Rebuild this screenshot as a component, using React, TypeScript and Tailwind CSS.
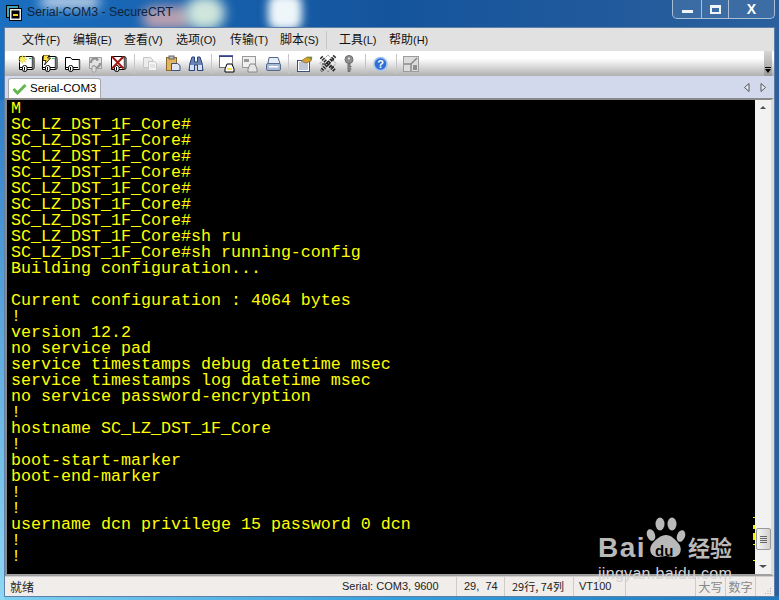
import React from 'react';

const lines = [
  'M',
  'SC_LZ_DST_1F_Core#',
  'SC_LZ_DST_1F_Core#',
  'SC_LZ_DST_1F_Core#',
  'SC_LZ_DST_1F_Core#',
  'SC_LZ_DST_1F_Core#',
  'SC_LZ_DST_1F_Core#',
  'SC_LZ_DST_1F_Core#',
  'SC_LZ_DST_1F_Core#sh ru',
  'SC_LZ_DST_1F_Core#sh running-config',
  'Building configuration...',
  '',
  'Current configuration : 4064 bytes',
  '!',
  'version 12.2',
  'no service pad',
  'service timestamps debug datetime msec',
  'service timestamps log datetime msec',
  'no service password-encryption',
  '!',
  'hostname SC_LZ_DST_1F_Core',
  '!',
  'boot-start-marker',
  'boot-end-marker',
  '!',
  '!',
  'username dcn privilege 15 password 0 dcn',
  '!',
  '!',
];

const menus = [
  ['文件', '(F)', 'w-[51px]'],
  ['编辑', '(E)', 'w-[51px]'],
  ['查看', '(V)', 'w-[52px]'],
  ['选项', '(O)', 'w-[54px]'],
  ['传输', '(T)', 'w-[50px]'],
  ['脚本', '(S)', 'w-[48px]'],
];

function Plug() {
  return (
    <>
      <path d="M1.500 12.500h3M9 12.500h5" fill="none" stroke="#000" />
      <rect x="4.500" y="10.500" width="4.500" height="6" rx="2" fill="#fff" stroke="#000" />
      <path d="M6.500 12v3.500" stroke="#000" />
    </>
  );
}

function Screen() {
  return (
    <>
      <path d="M1.500 1.500h13l1.500 1v11l-1.500 1h-13z" fill="#fff" stroke="#000" />
      <path d="M14.500 2v12" stroke="#555" strokeWidth="1.500" />
      <rect x="11" y="3" width="2.500" height="1" fill="#22c55e" />
    </>
  );
}

function Icon({ children, w = 17 }: { children: React.ReactNode; w?: number }) {
  return (
    <svg width={w} height="18" viewBox={`0 0 ${w} 18`} className="shrink-0">
      {children}
    </svg>
  );
}

function Sep({ className = 'mx-[7px]' }: { className?: string }) {
  return <div className={`h-[20px] w-px shrink-0 bg-[#c6c6c6] ${className}`} />;
}

function Toolbar() {
  return (
    <div className="flex h-[25px] items-center bg-gradient-to-b from-white from-30% to-[#b0b0b0] pl-[13px]">
      <div className="flex items-center gap-[6px]">
        <Icon>
          <Screen />
          <Plug />
          <path d="M4.500 0l1 2.500L8 1 6.500 3.500 9.500 4 6.500 5 8 7.500 5.500 6l-1 2.500L3.500 6 1 7.500 2.500 5 0 4l2.500-.5L1 1l2.500 1.500z" fill="#f6ef60" stroke="#c9b84a" strokeWidth="0.400" />
        </Icon>
        <Icon>
          <Screen />
          <Plug />
          <path d="M2.500 0h6L6.500 3h3L3.500 10 5 5.500H2z" fill="#fde047" stroke="#000" strokeWidth="0.800" />
        </Icon>
        <Icon>
          <path d="M1.500 14.500v-12h5l1.500 2h7.500v10z" fill="#fff" stroke="#000" />
          <path d="M15.500 5v9.500" stroke="#555" strokeWidth="1.500" />
          <Plug />
        </Icon>
        <Icon>
          <path d="M2.500 2.500h12v11h-12z" fill="#e2e2e2" stroke="#9a9a9a" />
          <path d="M4 8a4 4 0 017-3M13 8a4 4 0 01-7 3" fill="none" stroke="#8f8f8f" strokeWidth="2" />
          <path d="M10 3l2 2-3 1zM7 13l-2-2 3-1z" fill="#8f8f8f" />
          <rect x="5" y="11" width="4" height="6" rx="1.500" fill="#ddd" stroke="#999" />
        </Icon>
        <Icon>
          <Screen />
          <Plug />
          <path d="M2 1.500l11.500 12M13.500 1.500L2 13.500" stroke="#a11a12" strokeWidth="2" />
        </Icon>
      </div>
      <Sep />
      <div className="flex items-center gap-[7px]">
        <Icon w={16}>
          <path d="M1.500 2.500h7l2 2v8h-9z" fill="#ececec" stroke="#c6c6c6" />
          <path d="M6.500 6.500h6l2 2v7h-8z" fill="#f4f4f4" stroke="#c6c6c6" />
          <path d="M8 10h5M8 12h5" stroke="#d4d4d4" />
        </Icon>
        <Icon w={16}>
          <rect x="1.500" y="2.500" width="10" height="13" fill="#e3b45d" stroke="#8a6a2a" />
          <rect x="4" y="1" width="5" height="3" fill="#b9b9b9" stroke="#666" />
          <path d="M6.500 8.500h6l2.500 2v5h-8.500z" fill="#dfe6f2" stroke="#39527c" />
        </Icon>
        <Icon w={16}>
          <path d="M2 8l2-6h2.500v5h3V2H12l2 6 1 7.500H9.500V10h-3v5.500H1z" fill="#6d86b6" stroke="#26447c" />
          <rect x="2" y="10" width="4" height="5" fill="#d5e0f2" />
          <rect x="10" y="10" width="4" height="5" fill="#d5e0f2" />
        </Icon>
      </div>
      <Sep />
      <div className="flex items-center gap-[7px]">
        <Icon w={16}>
          <rect x="0.500" y="1.500" width="13" height="11" fill="#fff" stroke="#777" />
          <path d="M0 1h14" stroke="#1e2f8c" strokeWidth="1.500" />
          <path d="M6 14l2-5h5l2 5v3H6z" fill="#fff" stroke="#000" />
          <rect x="8" y="13" width="5" height="2" fill="#fde047" />
        </Icon>
        <Icon w={16}>
          <rect x="0.500" y="1.500" width="13" height="11" fill="#f0f0f0" stroke="#999" />
          <rect x="2" y="4" width="5" height="3" fill="#9a9a9a" />
          <path d="M6 14l2-5h5l2 5v3H6z" fill="#e5e5e5" stroke="#888" />
        </Icon>
        <Icon w={16}>
          <path d="M4 2.500h9l2 6H3z" fill="#e7edf6" stroke="#55698c" />
          <rect x="1.500" y="8.500" width="14" height="7" rx="1.500" fill="#a9bad3" stroke="#55698c" />
          <rect x="4" y="11" width="9" height="1.500" fill="#fff" />
        </Icon>
      </div>
      <Sep />
      <div className="flex items-center gap-[6px]">
        <Icon>
          <rect x="1.500" y="5.500" width="12" height="11" fill="#fff" stroke="#39527c" />
          <path d="M3 8h9M3 10h9M3 12h9M3 14h9" stroke="#7d90b4" />
          <path d="M5 6l6-4 5 0-1 4-5 2z" fill="#d9a036" stroke="#6e5a1a" strokeWidth="0.600" />
          <path d="M11 2h5v3z" fill="#5f9b35" />
        </Icon>
        <Icon w={18}>
          <path d="M2 2l14 14M16 1L2 16" stroke="#222" strokeWidth="3.500" strokeDasharray="1.500 1" />
          <path d="M9 0l8 8.500-8 8.500-8-8.500z" fill="none" stroke="#777" strokeDasharray="1 1" />
          <path d="M3 9h3M12 12h3M12 5h3" stroke="#000" />
        </Icon>
        <div className="ml-px">
          <Icon w={10}>
            <circle cx="5" cy="4.500" r="4" fill="#8f8f8f" stroke="#6e6e6e" />
            <circle cx="5" cy="3.500" r="1" fill="#eee" />
            <path d="M4 8.500h2v8H4zM6 11.500h1.500M6 14h1.500" fill="#8f8f8f" stroke="#6e6e6e" />
          </Icon>
        </div>
      </div>
      <Sep className="ml-[11px] mr-[7px]" />
      <Icon w={15}>
        <circle cx="7.500" cy="9" r="6.500" fill="#2f6fd6" stroke="#a5c4ee" strokeWidth="1.500" />
        <text x="7.500" y="13" textAnchor="middle" fill="#fff" fontSize="11" fontWeight="700" fontFamily="Liberation Sans, sans-serif">?</text>
      </Icon>
      <Sep className="ml-[8px] mr-[6px]" />
      <Icon w={16}>
        <rect x="0.500" y="1.500" width="15" height="15" fill="#dcdcdc" stroke="#9c9c9c" />
        <path d="M1 9h7v7M8 9l6-6" fill="none" stroke="#8a8a8a" strokeWidth="1.500" />
        <rect x="10" y="10" width="4" height="5" fill="#8f8f8f" />
      </Icon>
      <div className="ml-auto mr-[2px] flex h-full w-[8px] flex-col items-center justify-end bg-gradient-to-b from-[#d6d6d6] to-[#9a9a9a] pb-[3px]">
        <div className="mb-px h-px w-[6px] bg-black" />
        <div className="h-0 w-0 border-x-[3px] border-t-[4px] border-x-transparent border-t-black" />
      </div>
    </div>
  );
}

function Scrollbar() {
  return (
    <div className="flex w-[16px] shrink-0 flex-col items-center justify-between bg-[#f2f2f2]">
      <div className="mt-[6px] h-0 w-0 border-x-[3px] border-b-[3px] border-x-transparent border-b-[#505050]" />
      <div className="mt-auto mb-[15px] flex h-[22px] w-[15px] flex-col items-center justify-center gap-px rounded-[2px] border border-[#9a9a9a] bg-gradient-to-r from-[#f6f6f6] to-[#d0d0d0]">
        <div className="h-px w-[7px] bg-[#666]" />
        <div className="h-px w-[7px] bg-[#666]" />
        <div className="h-px w-[7px] bg-[#666]" />
        <div className="h-px w-[7px] bg-[#666]" />
      </div>
      <div className="mb-[6px] h-0 w-0 border-x-[4px] border-t-[3px] border-x-transparent border-t-[#505050]" />
    </div>
  );
}

function StatusCell({ className, children }: { className: string; children?: React.ReactNode }) {
  return (
    <div className={`flex h-full shrink-0 items-center whitespace-nowrap border-r border-[#cfcbc6] ${className}`}>{children}</div>
  );
}

function Watermark() {
  return (
    <div className="absolute left-[598px] top-[516px] w-[140px] text-[#b9b9b9] [font-family:'Liberation_Sans',sans-serif]">
      <svg width="40" height="43" viewBox="0 0 40 43" className="absolute left-[48px] top-0">
        <ellipse cx="5" cy="19" rx="4" ry="6" fill="#b9b9b9" transform="rotate(-20 5 19)" />
        <ellipse cx="14" cy="8" rx="4.500" ry="6.500" fill="#b9b9b9" />
        <ellipse cx="26" cy="8" rx="4.500" ry="6.500" fill="#b9b9b9" />
        <ellipse cx="35" cy="20" rx="4" ry="6" fill="#b9b9b9" transform="rotate(20 35 20)" />
        <path d="M20 19c5 0 9 4 13 9 4 6 1 13-6 13-3 0-4-1-7-1s-5 1-8 1c-7 0-10-7-6-13 4-5 9-9 14-9z" fill="#b9b9b9" />
      </svg>
      <div className="absolute left-0 top-[17px] text-[28px] font-bold leading-[30px] tracking-[1.500px]">Bai</div>
      <div className="absolute left-[57px] top-[27px] rounded-full text-[15px] font-bold leading-[16px] text-black">du</div>
      <div className="absolute left-[90px] top-[17px] whitespace-nowrap text-[22px] font-bold leading-[26px] [font-family:'Noto_Sans_CJK_SC',sans-serif]">经验</div>
      <div className="absolute left-0 top-[49px] whitespace-nowrap text-[16px] leading-[18px] tracking-[0.300px] text-[#d4d4d4]">jingyan.baidu.com</div>
    </div>
  );
}

export default function App() {
  return (
    <div className="relative h-[600px] w-[779px] overflow-hidden bg-gradient-to-r from-[#1a6fc0] via-[#14549c] to-[#2a5f9c] [font-family:'Liberation_Sans',sans-serif]">
      <div className="absolute bottom-0 left-0 h-[4px] w-[779px] bg-gradient-to-r from-[#7fd0f0] via-[#35a0dc] to-[#1f78bc]" />
      <div className="absolute left-0 top-[100px] h-[500px] w-[5px] bg-gradient-to-b from-[#2f7fc8] to-[#8fd8f4]" />
      <div className="absolute left-[142px] top-[6px] h-[24px] w-[50px] rounded-full bg-[#b89fb0] blur-[6px]" />
      <div className="absolute left-[185px] top-[-4px] h-[34px] w-[40px] rounded-full bg-[#cfe6dc] blur-[6px]" />
      <div className="absolute left-[268px] top-[-6px] h-[36px] w-[34px] rounded-[10px] bg-[#eef6fa] blur-[4px]" />
      <div className="absolute left-[40px] top-[-4px] h-[12px] w-[60px] rounded-full bg-[#cfdcec] blur-[6px]" />

      <div className="relative flex h-[27px] items-start">
        <svg width="16" height="16" viewBox="0 0 16 16" className="ml-[6px] mt-[5px]">
          <rect x="0.500" y="0.500" width="12" height="12" fill="#3fa7b8" stroke="#000" />
          <rect x="3.500" y="3.500" width="12" height="12" fill="#e9e9e9" stroke="#000" />
          <rect x="5.500" y="5.500" width="8" height="8" fill="#000" />
          <rect x="7" y="9" width="5" height="2" fill="#f5d90a" />
        </svg>
        <div className="ml-[5px] mt-[4px] text-[12.300px] leading-[17px] text-[#10233a]">
          Serial-COM3 - SecureCRT
        </div>
        <div className="ml-auto mr-[4px] flex h-[19px] w-[103px] rounded-b-[5px] border border-t-0 border-[#a9bdd4] bg-[#4a76a8]/60 text-white">
          <div className="flex w-[29px] items-center justify-center border-r border-[#a9bdd4]">
            <div className="mt-[5px] h-[3px] w-[11px] bg-[#f2f5f8]" />
          </div>
          <div className="flex w-[27px] items-center justify-center border-r border-[#a9bdd4]">
            <div className="h-[9px] w-[11px] border-2 border-t-[3px] border-[#f2f5f8]" />
          </div>
          <div className="flex flex-1 items-center justify-center text-[14px] font-bold leading-none">X</div>
        </div>
      </div>

      <div className="relative mx-[4px] flex h-[570px] flex-col border border-[#5d7fa8] bg-[#ececec]">
        <div className="flex h-[23px] items-center bg-[#e1e1e1] pl-[17px] text-[12px] text-[#111] [font-family:'Noto_Sans_CJK_SC',sans-serif]">
          {menus.map(([zh, key, width]) => (
            <div key={zh} className={`${width} whitespace-nowrap`}>
              {zh}
              <span className="text-[11px] [font-family:'Liberation_Sans',sans-serif]">{key}</span>
            </div>
          ))}
          <div className="mr-[12px] ml-[-2px] h-[18px] w-px bg-[#c8c8c8]" />
          <div className="w-[50px] whitespace-nowrap">
            工具<span className="text-[11px] [font-family:'Liberation_Sans',sans-serif]">(L)</span>
          </div>
          <div className="whitespace-nowrap">
            帮助<span className="text-[11px] [font-family:'Liberation_Sans',sans-serif]">(H)</span>
          </div>
        </div>
        <Toolbar />
        <div className="flex h-[22px] items-end bg-[#d3d9ec] pl-[3px]">
          <div className="flex h-[20px] w-[93px] items-center gap-[3px] whitespace-nowrap rounded-t-[3px] border border-b-0 border-[#a9a9a9] bg-white pl-[3px] text-[11.500px] text-black">
            <svg width="15" height="12" viewBox="0 0 15 12">
              <path d="M1.500 6l4 4 8-8" fill="none" stroke="#62b84c" strokeWidth="3" />
            </svg>
            Serial-COM3
          </div>
          <div className="ml-auto mr-[8px] flex h-full items-center gap-[10px]">
            <svg width="6" height="9" viewBox="0 0 6 9"><path d="M5 .5v8L.5 4.500z" fill="#e8ecf4" stroke="#555" /></svg>
            <svg width="6" height="9" viewBox="0 0 6 9"><path d="M1 .5v8l4.500-4z" fill="#e8ecf4" stroke="#555" /></svg>
          </div>
        </div>
        <div className="flex h-[478px] border-y-2 border-l-2 border-r-[3px] border-[#8a8a8a] border-r-[#dcdcdc] border-b-[#a0a0a0]">
          <div className="relative flex-1 overflow-hidden bg-black pl-[4px] pt-px text-[16.670px] leading-[16px] text-[#ffff00] [font-family:'Liberation_Mono',monospace]">
            {lines.map((line, i) => (
              <div key={i} className="h-[16px] whitespace-pre">{line}</div>
            ))}
            <div className="absolute right-0 top-[417px] h-px w-[2px] bg-[#f0f000]" />
            <div className="absolute right-0 top-[425px] h-[4px] w-[2px] bg-[#f0f000]" />
            <div className="absolute right-0 top-[433px] h-[7px] w-[2px] bg-[#f0f000]" />
            <div className="absolute right-0 top-[444px] h-px w-[2px] bg-[#f0f000]" />
            <div className="absolute right-0 top-[460px] h-px w-[2px] bg-[#f0f000]" />
          </div>
          <Scrollbar />
        </div>
        <div className="flex h-[20px] items-center border-t border-[#d0d0d0] bg-[#f0edea] text-[11px] text-[#222]">
          <div className="flex h-full w-[331px] shrink-0 items-center pl-[5px] text-[12px] [font-family:'Noto_Sans_CJK_SC',sans-serif]">就绪</div>
          <StatusCell className="w-[121px] pl-[6px]">Serial: COM3, 9600</StatusCell>
          <StatusCell className="w-[48px] pl-[7px]">29,&nbsp;&nbsp;74</StatusCell>
          <StatusCell className="w-[69px] pl-[7px] text-[11px] [font-family:'Noto_Sans_CJK_SC',sans-serif]">29行, 74列</StatusCell>
          <StatusCell className="w-[52px] pl-[5px]">VT100</StatusCell>
          <StatusCell className="w-[70px]" />
          <StatusCell className="w-[30px] justify-center text-[12px] text-[#888] [font-family:'Noto_Sans_CJK_SC',sans-serif]">大写</StatusCell>
          <StatusCell className="w-[30px] justify-center text-[12px] text-[#888] [font-family:'Noto_Sans_CJK_SC',sans-serif]">数字</StatusCell>
          <svg width="8" height="8" viewBox="0 0 8 8" className="ml-auto mr-[2px] mt-[8px]">
            <path d="M6 1h1v1H6zM3.500 3.500h1v1h-1zM6 3.500h1v1H6zM1 6h1v1H1zM3.500 6h1v1h-1zM6 6h1v1H6z" fill="#a8a8a8" />
          </svg>
        </div>
      </div>
      <Watermark />
    </div>
  );
}
